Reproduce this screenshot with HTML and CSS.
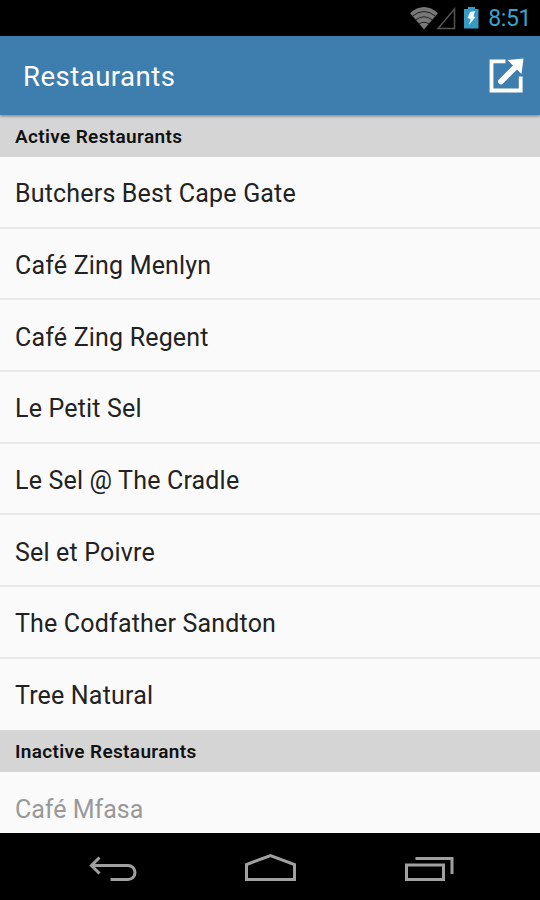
FILE: index.html
```
<!DOCTYPE html>
<html lang="en">
<head>
<meta charset="utf-8">
<title>Restaurants</title>
<link rel="stylesheet" href="styles.css">
</head>
<body>
<div class="status">
  <svg class="status-icons" width="72" height="36" viewBox="0 0 72 36">
    <path d="M0 13Q14 1 28 13L14 29.500Z" fill="#777"/>
    <path d="M2 16.500Q14 6.500 26 16.500M5.500 20Q14 13.500 22.500 20M9 24Q14 20.500 19 24" fill="none" stroke="#222" stroke-width="1"/>
    <path d="M28 28.500L44.500 9V28.500Z" fill="none" stroke="#555" stroke-width="1.500"/>
    <path d="M54 9H58V7H65V9H68.500V28.500H54Z" fill="#369bc4"/>
    <path d="M60 12L65 11L63.500 16.500L65.500 17L59 25L60.500 19L57.500 18Z" fill="#eefaff"/>
  </svg>
  <span class="clock">8:51</span>
</div>
<header class="bar">
  <h1 class="title">Restaurants</h1>
  <svg width="36" height="36" viewBox="0 0 36 36">
    <path d="M16.500 3.300H2.500V32.500H31.700V18.500" fill="none" stroke="#fff" stroke-width="3.800"/>
    <path d="M12 23.500L27 8.500" stroke="#fff" stroke-width="5.800" stroke-linecap="round"/>
    <path d="M18.500 2L34.500 0.500L32.500 16Z" fill="#fff"/>
  </svg>
</header>
<main class="content">
  <h2 class="section">Active Restaurants</h2>
  <ul class="list">
    <li><span>Butchers Best Cape Gate</span></li>
    <li><span>Café Zing Menlyn</span></li>
    <li><span>Café Zing Regent</span></li>
    <li><span>Le Petit Sel</span></li>
    <li><span>Le Sel @ The Cradle</span></li>
    <li><span>Sel et Poivre</span></li>
    <li><span>The Codfather Sandton</span></li>
    <li><span>Tree Natural</span></li>
  </ul>
  <h2 class="section">Inactive Restaurants</h2>
  <ul class="list inactive">
    <li><span>Café Mfasa</span></li>
  </ul>
</main>
<nav class="nav">
  <svg width="180" height="67" viewBox="0 0 180 67">
    <path d="M92 32.500H128A7 7 0 0 1 128 46.500H110.500M99.500 24.500L91.500 32.500L99.500 40.500" />
  </svg>
  <svg width="180" height="67" viewBox="0 0 180 67">
    <path d="M66.500 46.500V31.500L90.500 22.500L114.500 31.500V46.500Z" />
  </svg>
  <svg width="180" height="67" viewBox="0 0 180 67">
    <path d="M46.500 32H83.500V46.500H46.500ZM55.500 25.500H92V41" />
  </svg>
</nav>
</body>
</html>
```
FILE: styles.css
```
* { box-sizing: border-box; }
body {
  margin: 0;
  width: 540px;
  height: 900px;
  display: flex;
  flex-direction: column;
  overflow: hidden;
  background: #000;
  font-family: Roboto, sans-serif;
}
.status {
  height: 36px;
  display: flex;
  align-items: center;
  justify-content: flex-end;
  gap: 6px;
  padding-right: 9px;
}
.clock {
  font-size: 23px;
  line-height: 36px;
  letter-spacing: -.4px;
  color: #35a4d0;
  padding-top: 2px;
}
.bar {
  height: 79px;
  flex: none;
  display: flex;
  align-items: center;
  justify-content: space-between;
  padding: 0 15px 0 23px;
  background: #3e7eae;
  box-shadow: 0 1px 3px rgba(0, 0, 0, .45);
  z-index: 1;
}
.title {
  margin: 0;
  padding-top: 2px;
  font-size: 27.500px;
  font-weight: 400;
  line-height: 36px;
  letter-spacing: .5px;
  color: #fff;
}
.content {
  height: 718px;
  flex: none;
  overflow: hidden;
  background: #fafafa;
}
.section {
  margin: 0;
  height: 42px;
  padding: 0 15px;
  background: #d5d5d5;
  font-size: 19px;
  font-weight: 600;
  line-height: 43px;
  letter-spacing: .35px;
  color: #111;
}
.list {
  list-style: none;
  margin: 0;
  padding: 0;
}
.list li {
  height: 71.680px;
  display: flex;
  align-items: center;
  padding: 5px 15px 0;
  border-bottom: 2px solid #e8e8e8;
  font-size: 25px;
  line-height: 34px;
  letter-spacing: .18px;
  font-weight: 380;
  color: #222;
}
.list li:last-child { border-bottom-color: transparent; }
.inactive li { color: #999; letter-spacing: 0; }
.nav {
  height: 67px;
  flex: none;
  display: flex;
}
.nav path {
  fill: none;
  stroke: #a0a0a0;
  stroke-width: 3;
}
```
